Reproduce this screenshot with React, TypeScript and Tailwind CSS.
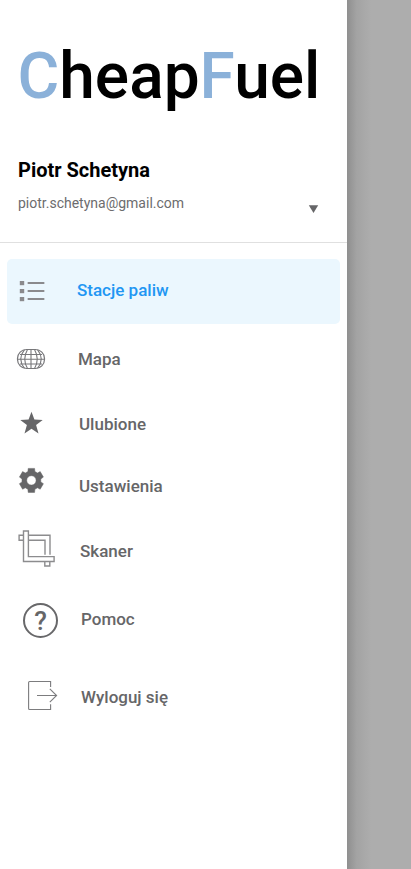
import type { ReactNode } from "react";

function ListIcon() {
  return (
    <svg className="h-[22px] w-[26px]" viewBox="19 280 26 22" fill="#8a8a8d">
      <rect x="19.8" y="281" width="4.4" height="4.2" />
      <rect x="19.8" y="289" width="4.4" height="4.2" />
      <rect x="19.8" y="297" width="4.4" height="4.2" />
      <rect x="27.5" y="282" width="17" height="2" rx=".8" />
      <rect x="27.5" y="290" width="17" height="2" rx=".8" />
      <rect x="27.5" y="298" width="17" height="2" rx=".8" />
    </svg>
  );
}

function GlobeIcon() {
  return (
    <svg className="h-[22px] w-[30px]" viewBox="16 348 30 22" fill="none" stroke="#77777a" strokeWidth="1.1">
      <rect x="17.5" y="349.5" width="27" height="19" rx="9" strokeWidth="1.2" />
      <path d="M31 349.4V368.6M27.5 349.4Q22 359 27.5 368.6M34.5 349.4Q40 359 34.5 368.6M24.5 349.6Q17 359 24.5 368.4M37.5 349.6Q45 359 37.5 368.4" />
      <path d="M20 354.5H42M17.5 359.3H44.5M20 364H42" />
    </svg>
  );
}

function StarIcon() {
  return (
    <svg className="h-6 w-6" viewBox="19.5 411 24 24" fill="#666668">
      <path d="M32 411.8L34.9 419.6L43.2 419.9L36.6 425.1L39 433.4L32 428.7L25 433.4L27.4 425.1L20.8 419.9L29.1 419.6Z" />
    </svg>
  );
}

function GearIcon() {
  return (
    <svg className="h-[26px] w-[26px]" viewBox="-13.4 -13.4 26 26" fill="#666668" fillRule="evenodd" stroke="#666668" strokeWidth=".5" strokeLinejoin="round">
      <path d="M-3.2 -12H3.2L3.5 -8.9L6.1 -7.4L8.8 -8.8L12 -3.3L9.4 -1.5V1.5L12 3.3L8.8 8.8L6.1 7.4L3.5 8.9L3.2 12H-3.2L-3.5 8.9L-6.1 7.4L-8.8 8.8L-12 3.3L-9.4 1.5V-1.5L-12 -3.3L-8.8 -8.8L-6.1 -7.4L-3.5 -8.9ZM0 -4.7A4.7 4.7 0 1 0 0 4.7A4.7 4.7 0 1 0 0 -4.7Z" />
    </svg>
  );
}

function CropIcon() {
  return (
    <svg className="h-[38px] w-[38px]" viewBox="18 530 38 38" fill="none" stroke="#8c8c8e" strokeWidth="1.4">
      <path d="M23.5 531H28.4V556.6H54.1V561.5H23.5Z" />
      <path d="M23.5 535.3H19.1V540.2H23.5M28.4 535.3H50V554.8M28.4 540.2H45V554.8" />
      <path d="M44.8 561.5V566H49.8V561.5" />
    </svg>
  );
}

function HelpIcon() {
  return (
    <div className="flex h-[35px] w-[35px] items-center justify-center rounded-full border-2 border-[#68686a] text-[26px] leading-none font-medium text-[#666668]">
      ?
    </div>
  );
}

function LogoutIcon() {
  return (
    <svg className="h-[31px] w-[31px]" viewBox="27 680 31 31" fill="none" stroke="#7c7c7e" strokeWidth="1.1">
      <path d="M50.6 687V681.5H29.6Q28.6 681.5 28.6 682.5V708.5Q28.6 709.5 29.6 709.5H50.6V704.2" />
      <path d="M37 695.5H56.4M49.8 688.8L56.6 695.5L49.8 702.2" />
    </svg>
  );
}

interface ItemProps {
  label: string;
  icon: ReactNode;
  row: string;
  iconBox: string;
}

function MenuItem({ label, icon, row, iconBox }: ItemProps) {
  return (
    <li className={`flex items-center ${row}`}>
      <span className={`flex h-full shrink-0 items-start ${iconBox}`}>{icon}</span>
      <span className="text-[17px] leading-6 font-medium">{label}</span>
    </li>
  );
}

const items: ItemProps[] = [
  { label: "Stacje paliw", icon: <ListIcon />, row: "mx-[7px] h-[65px] rounded-[5px] bg-[#ebf7fe] pb-[3px] text-[#2196f3]", iconBox: "w-[70px] pl-3 pt-[21px]" },
  { label: "Mapa", icon: <GlobeIcon />, row: "h-[70px]", iconBox: "w-[78px] pl-4 pt-6" },
  { label: "Ulubione", icon: <StarIcon />, row: "h-[60px]", iconBox: "w-[79px] pl-[19px] pt-[17px]" },
  { label: "Ustawienia", icon: <GearIcon />, row: "h-[64px]", iconBox: "w-[79px] pl-[18px] pt-[13px]" },
  { label: "Skaner", icon: <CropIcon />, row: "h-[66px]", iconBox: "w-[80px] pl-[18px] pt-3" },
  { label: "Pomoc", icon: <HelpIcon />, row: "h-[70px]", iconBox: "w-[81px] pl-[23px] pt-[19px]" },
  { label: "Wyloguj się", icon: <LogoutIcon />, row: "h-[86px]", iconBox: "w-[81px] pl-[27px] pt-[26px]" },
];

export default function App() {
  return (
    <div className="flex h-[869px] w-[411px] overflow-hidden bg-[#adadad] font-['Roboto',sans-serif]">
      <aside className="flex w-[347px] shrink-0 flex-col bg-white">
        <header className="h-[243px] border-b border-[#e0e0e0] pt-[45px] pl-[17.5px]">
          <h1 className="text-[64px] leading-[64px] font-medium whitespace-nowrap text-black">
            <span className="text-[#8bb1d9]">C</span>heap<span className="text-[#8bb1d9]">F</span>uel
          </h1>
          <p className="mt-[49px] pl-[0.5px] text-xl leading-6 font-bold text-black">Piotr Schetyna</p>
          <div className="mt-[11px] flex items-start justify-between pr-7 pl-[0.5px]">
            <p className="text-sm leading-5 text-[#6c6c6e]">piotr.schetyna@gmail.com</p>
            <svg className="mt-3 h-2 w-[11px]" viewBox="0 0 11 8" fill="#666668">
              <path d="M.8 .3H10.2L5.5 8Z" />
            </svg>
          </div>
        </header>
        <ul className="mt-4 text-[#666668]">
          {items.map((item) => (
            <MenuItem key={item.label} {...item} />
          ))}
        </ul>
      </aside>
      <div className="w-6 bg-linear-to-r from-[#8f8f8f] via-[#a3a3a3] via-40% to-[#adadad]" />
    </div>
  );
}
